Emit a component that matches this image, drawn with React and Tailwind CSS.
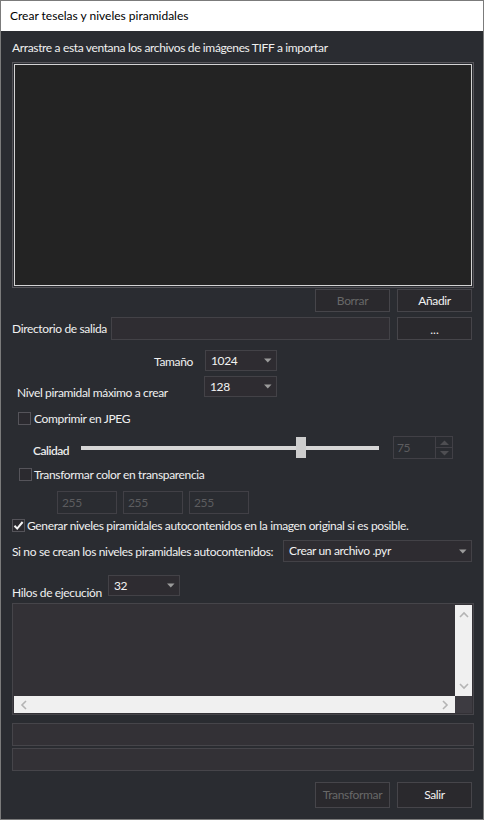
const font = { fontFamily: 'Lato, "Liberation Sans", Arial, sans-serif' };

function Combo({ value, className }) {
  return (
    <div
      className={
        "flex items-center justify-between border border-[#434247] bg-[#2e2c31] pl-[5px] pr-[4px] text-[#f2f2f2] " +
        className
      }
    >
      <span className="whitespace-nowrap leading-none">{value}</span>
      <svg width="8" height="5" viewBox="0 0 8 5">
        <path d="M0 0.5 H7.5 L3.75 4.5 Z" fill="#9b9b9b" />
      </svg>
    </div>
  );
}

function Button({ children, disabled, className = "" }) {
  return (
    <div
      className={
        "flex w-[75px] items-center justify-center border border-[#46454a] bg-[#2a292d] " +
        (disabled ? "text-[#686868] " : "text-[#f2f2f2] ") +
        className
      }
    >
      {children}
    </div>
  );
}

function Checkbox({ checked }) {
  return (
    <div className="flex h-[13px] w-[13px] shrink-0 items-center justify-center border border-[#55545a] bg-[#2b2a2f]">
      {checked && (
        <svg width="11" height="11" viewBox="0 0 11 11">
          <path d="M1.5 5.8 L4.2 8.6 L9.6 2" fill="none" stroke="#f4f4f4" strokeWidth="2" />
        </svg>
      )}
    </div>
  );
}

function Chevron({ dir }) {
  const paths = {
    up: "M1 6 L5 2 L9 6",
    down: "M1 2 L5 6 L9 2",
    left: "M6 1 L2 5 L6 9",
    right: "M2 1 L6 5 L2 9",
  };
  const vertical = dir === "up" || dir === "down";
  return (
    <svg width={vertical ? 10 : 8} height={vertical ? 8 : 10} viewBox={vertical ? "0 0 10 8" : "0 0 8 10"}>
      <path d={paths[dir]} fill="none" stroke="#b4b4b4" strokeWidth="1.6" />
    </svg>
  );
}

function DisabledField({ value, className = "" }) {
  return (
    <div className={"flex items-center border border-[#414046] bg-[#2a2c31] pl-[4px] text-[#5c5c5f] " + className}>
      {value}
    </div>
  );
}

export default function App() {
  return (
    <div
      className="flex h-[820px] w-[484px] flex-col whitespace-nowrap border border-[#7b7b7b] bg-[#2a2c31] text-[12px] text-[#f0f0f0]"
      style={font}
    >
      <div className="flex h-[30px] shrink-0 items-center bg-white pl-[9px] text-[12px] text-black">
        Crear teselas y niveles piramidales
      </div>

      <div className="flex flex-col pl-[11px] pr-[9px] tracking-[-0.35px]">
        <div className="mt-[9px] h-[16px] leading-[16px]">
          Arrastre a esta ventana los archivos de imágenes TIFF a importar
        </div>

        <div className="mt-[6px] h-[226px] border border-[#56555a] p-[1px]">
          <div className="h-full w-full border border-[#d4d4d4] bg-[#232323]" />
        </div>

        <div className="mr-[2px] mt-[1px] flex h-[23px] justify-end gap-[7px]">
          <Button disabled>Borrar</Button>
          <Button>Añadir</Button>
        </div>

        <div className="mr-[2px] mt-[5px] flex h-[23px] items-center">
          <span className="w-[99px]">Directorio de salida</span>
          <div className="h-full w-[279px] border border-[#434247] bg-[#2f2d32]" />
          <Button className="ml-[7px] h-full pt-[3px] tracking-normal">...</Button>
        </div>

        <div className="mt-[10px] flex h-[21px] items-center">
          <span className="w-[181px] pt-[2px] text-right">Tamaño</span>
          <Combo value="1024" className="ml-[12px] h-full w-[72px]" />
        </div>

        <div className="mt-[5px] flex h-[21px] items-start">
          <span className="ml-[5px] mt-[8px] w-[187px]">Nivel piramidal máximo a crear</span>
          <Combo value="128" className="h-full w-[73px]" />
        </div>

        <div className="ml-[6px] mt-[15px] flex h-[13px] items-center gap-[3px]">
          <Checkbox />
          <span>Comprimir en JPEG</span>
        </div>

        <div className="mt-[11px] flex h-[23px] items-center">
          <span className="ml-[21px] mt-[7px] w-[48px] font-semibold tracking-[-0.5px] text-[#ececec]">Calidad</span>
          <div className="relative h-[21px] w-[298px]">
            <div className="mt-[9px] h-[4px] w-full bg-[#d6d6d6]" />
            <div className="absolute left-[215px] top-0 h-[21px] w-[10px] bg-[#cdcdcd]" />
          </div>
          <div className="ml-[14px] flex h-full w-[60px] border border-[#414046]">
            <div className="flex flex-1 items-center pl-[3px] text-[#5c5c5f]">75</div>
            <div className="flex w-[17px] flex-col border-l border-[#414046]">
              <div className="flex flex-1 items-center justify-center border-b border-[#414046]">
                <svg width="9" height="5" viewBox="0 0 9 5">
                  <path d="M0 5 L4.5 0.5 L9 5 Z" fill="#4e4e52" />
                </svg>
              </div>
              <div className="flex flex-1 items-center justify-center">
                <svg width="9" height="5" viewBox="0 0 9 5">
                  <path d="M0 0 L4.5 4.5 L9 0 Z" fill="#4e4e52" />
                </svg>
              </div>
            </div>
          </div>
        </div>

        <div className="ml-[7px] mt-[9px] flex h-[13px] items-center gap-[2px]">
          <Checkbox />
          <span>Transformar color en transparencia</span>
        </div>

        <div className="ml-[45px] mt-[10px] flex h-[23px] gap-[6px]">
          <DisabledField value="255" className="w-[60px]" />
          <DisabledField value="255" className="w-[60px]" />
          <DisabledField value="255" className="w-[60px]" />
        </div>

        <div className="mt-[5px] flex h-[13px] items-center gap-[2px]">
          <Checkbox checked />
          <span>Generar niveles piramidales autocontenidos en la imagen original si es posible.</span>
        </div>

        <div className="mr-[2px] mt-[8px] flex h-[22px] items-center justify-between">
          <span className="pt-[2px]">Si no se crean los niveles piramidales autocontenidos:</span>
          <Combo value="Crear un archivo .pyr" className="h-full w-[189px]" />
        </div>

        <div className="mt-[13px] flex h-[21px] items-start">
          <span className="mt-[9px] w-[96px]">Hilos de ejecución</span>
          <Combo value="32" className="h-full w-[72px]" />
        </div>

        <div className="mt-[7px] grid h-[112px] grid-cols-[1fr_17px] grid-rows-[1fr_17px] border border-[#46454a] bg-[#333136] p-[1px]">
          <div />
          <div className="flex flex-col items-center justify-between bg-[#f0f0f0] py-[6px]">
            <Chevron dir="up" />
            <Chevron dir="down" />
          </div>
          <div className="flex items-center justify-between bg-[#f0f0f0] px-[6px]">
            <Chevron dir="left" />
            <Chevron dir="right" />
          </div>
          <div className="bg-[#3d3b41]" />
        </div>

        <div className="mt-[8px] h-[23px] border border-[#46454a] bg-[#333136]" />
        <div className="mt-[2px] h-[23px] border border-[#46454a] bg-[#333136]" />

        <div className="mr-[2px] mt-[11px] flex h-[26px] justify-end gap-[7px]">
          <Button disabled>Transformar</Button>
          <Button>Salir</Button>
        </div>
      </div>
    </div>
  );
}
